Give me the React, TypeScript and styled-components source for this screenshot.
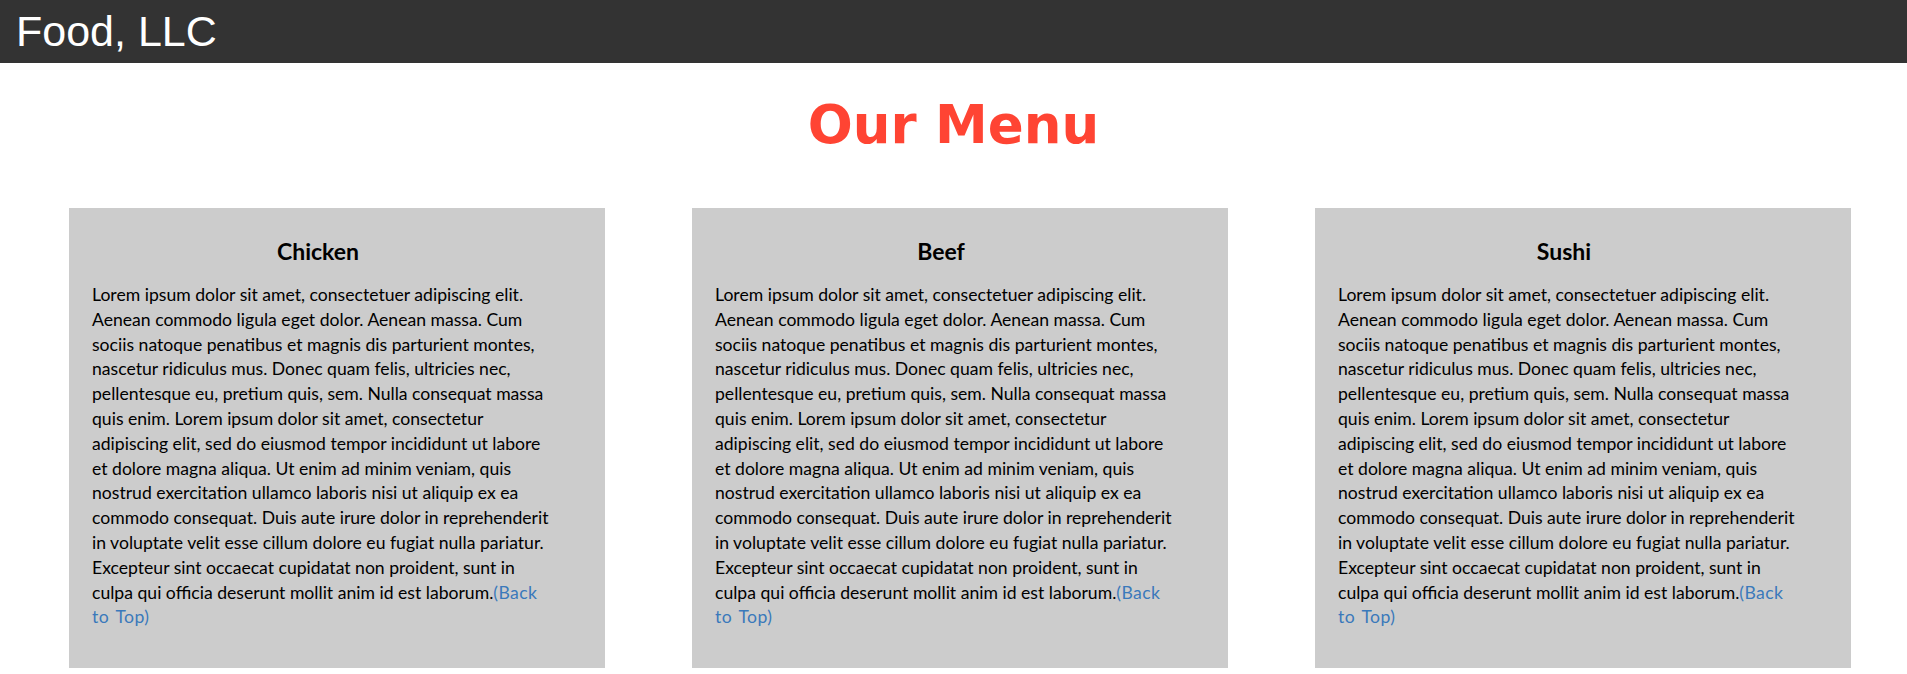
import React from "react";
import styled, { createGlobalStyle } from "styled-components";

const Global = createGlobalStyle`
  html, body { margin: 0; padding: 0; background: #fff; }
  body { font-family: "Comic Sans MS", Lato, "Open Sans", sans-serif; }
`;

const Header = styled.header`
  height: 63px;
  background: #333333;
  display: flex;
  align-items: center;
  padding-left: 16px;
`;

const Brand = styled.div`
  font-family: "Liberation Sans", Arial, sans-serif;
  font-size: 43px;
  line-height: 49px;
  color: #ffffff;
`;

const Title = styled.h1`
  margin: 32px 0 53px;
  text-align: center;
  font-family: "Comic Sans MS", "DejaVu Sans", sans-serif;
  font-weight: 700;
  font-size: 53px;
  line-height: 60px;
  color: #ff4433;
`;

const Row = styled.main`
  display: flex;
  gap: 87px;
  padding-left: 69px;
`;

const Card = styled.section`
  box-sizing: border-box;
  width: 536px;
  flex: 0 0 536px;
  height: 460px;
  background: #cccccc;
  padding: 29px 48px 0 23px;
`;

const CardTitle = styled.h3`
  margin: 0 13px 18px 0;
  text-align: center;
  font-family: "Comic Sans MS", Lato, sans-serif;
  font-weight: 700;
  font-size: 23px;
  line-height: 28px;
  color: #000;
`;

const Body = styled.p`
  margin: 0;
  font-family: "Comic Sans MS", Lato, sans-serif;
  font-size: 17.6px;
  line-height: 24.8px;
  color: #000;
`;

const BackLink = styled.a`
  color: #3a79bb;
  text-decoration: none;
  letter-spacing: 0.4px;
  word-spacing: 2px;
`;

const lorem =
  "Lorem ipsum dolor sit amet, consectetuer adipiscing elit. Aenean commodo ligula eget dolor. Aenean massa. Cum sociis natoque penatibus et magnis dis parturient montes, nascetur ridiculus mus. Donec quam felis, ultricies nec, pellentesque eu, pretium quis, sem. Nulla consequat massa quis enim. Lorem ipsum dolor sit amet, consectetur adipiscing elit, sed do eiusmod tempor incididunt ut labore et dolore magna aliqua. Ut enim ad minim veniam, quis nostrud exercitation ullamco laboris nisi ut aliquip ex ea commodo consequat. Duis aute irure dolor in reprehenderit in voluptate velit esse cillum dolore eu fugiat nulla pariatur. Excepteur sint occaecat cupidatat non proident, sunt in culpa qui officia deserunt mollit anim id est laborum.";

const items = ["Chicken", "Beef", "Sushi"];

export default function App() {
  return (
    <>
      <Global />
      <Header id="top">
        <Brand>Food, LLC</Brand>
      </Header>
      <Title>Our Menu</Title>
      <Row>
        {items.map((name) => (
          <Card key={name}>
            <CardTitle>{name}</CardTitle>
            <Body>
              {lorem}
              <BackLink href="#top">(Back to Top)</BackLink>
            </Body>
          </Card>
        ))}
      </Row>
    </>
  );
}
